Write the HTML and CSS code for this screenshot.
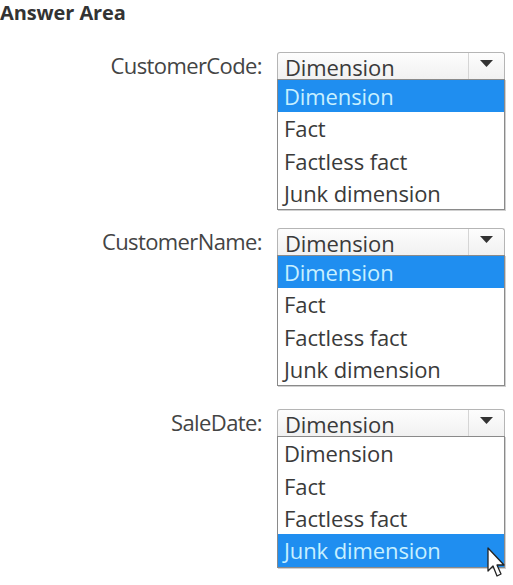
FILE: index.html
```html
<!DOCTYPE html>
<html>
<head>
<meta charset="utf-8">
<link rel="stylesheet" href="styles.css">
</head>
<body>
<div class="page">
  <h1 class="title">Answer Area</h1>

  <div class="group">
    <div class="label">CustomerCode:</div>
    <div class="dropdown">
      <div class="select"><span class="value">Dimension</span><span class="btn"><svg width="13" height="7" viewBox="0 0 13 7"><path d="M0 0H13L6.5 7Z" fill="#333"/></svg></span></div>
      <ul class="list">
        <li class="opt active">Dimension</li>
        <li class="opt">Fact</li>
        <li class="opt">Factless fact</li>
        <li class="opt">Junk dimension</li>
      </ul>
    </div>
  </div>

  <div class="group">
    <div class="label">CustomerName:</div>
    <div class="dropdown">
      <div class="select"><span class="value">Dimension</span><span class="btn"><svg width="13" height="7" viewBox="0 0 13 7"><path d="M0 0H13L6.5 7Z" fill="#333"/></svg></span></div>
      <ul class="list">
        <li class="opt active">Dimension</li>
        <li class="opt">Fact</li>
        <li class="opt">Factless fact</li>
        <li class="opt">Junk dimension</li>
      </ul>
    </div>
  </div>

  <div class="group group-last">
    <div class="label">SaleDate:</div>
    <div class="dropdown">
      <div class="select"><span class="value">Dimension</span><span class="btn"><svg width="13" height="7" viewBox="0 0 13 7"><path d="M0 0H13L6.5 7Z" fill="#333"/></svg></span></div>
      <ul class="list">
        <li class="opt">Dimension</li>
        <li class="opt">Fact</li>
        <li class="opt">Factless fact</li>
        <li class="opt active">Junk dimension</li>
      </ul>
      <svg class="cursor" width="20" height="32" viewBox="0 0 20 32"><path d="M1 1V24L6 19L10 29L14 27L10 18H17Z" fill="#fff" stroke="#222" stroke-width="1.3" stroke-linejoin="round"/></svg>
    </div>
  </div>
</div>
</body>
</html>
```

FILE: styles.css
```css
html, body {
  margin: 0;
  padding: 0;
  background: #fff;
}
body {
  font-family: "Open Sans", "Noto Sans", sans-serif;
  color: #3a3a3a;
}
.page {
  width: 513px;
  height: 585px;
  overflow: hidden;
  display: flex;
  flex-direction: column;
  gap: 18px;
}
.title {
  margin: 0 0 -18px 0;
  padding: 1px 0 0 0;
  font-size: 20px;
  font-weight: 700;
  line-height: 24px;
  height: 51px;
  letter-spacing: -0.1px;
  color: #333;
}
.group {
  display: flex;
  align-items: flex-start;
}
.group-last {
  margin-top: 5px;
}
.label {
  width: 277px;
  box-sizing: border-box;
  padding-right: 15px;
  text-align: right;
  font-size: 22px;
  line-height: 27px;
  letter-spacing: -0.6px;
  color: #444;
}
.dropdown {
  position: relative;
  width: 228px;
}
.select {
  display: flex;
  height: 27px;
  box-sizing: border-box;
  border: 1px solid #b5b5b5;
  border-bottom: none;
  border-radius: 3px 3px 0 0;
  background: linear-gradient(#fdfdfd, #f1f1f1);
}
.value {
  flex: 1;
  padding-left: 7px;
  font-size: 22px;
  line-height: 28px;
  letter-spacing: -0.1px;
  color: #3a3a3a;
}
.btn {
  width: 36px;
  border-left: 1px solid #d5d5d5;
  display: flex;
  justify-content: center;
  padding-top: 7px;
  box-sizing: border-box;
}
.list {
  list-style: none;
  margin: 0;
  padding: 0;
  border: 1px solid #8a8a8a;
  box-shadow: 1px 1px 0 #d0d0d0;
  background: #fff;
}
.opt {
  height: 32.3px;
  line-height: 32px;
  padding-left: 6px;
  font-size: 22px;
  letter-spacing: -0.1px;
  color: #3a3a3a;
}
.opt.active {
  background: #1f8ef0;
  color: #c8f0ff;
}
.cursor {
  position: absolute;
  left: 210px;
  top: 138px;
}
```
